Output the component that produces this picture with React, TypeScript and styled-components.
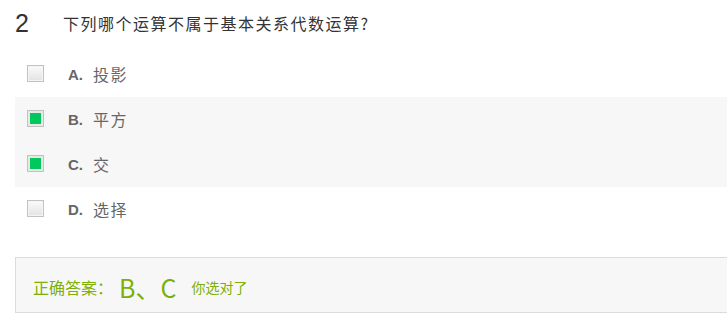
import styled, { createGlobalStyle } from "styled-components"

const GlobalStyle = createGlobalStyle`
    html, body {
        margin: 0;
        padding: 0;
        background: #fff;
        overflow: hidden;
    }
    body {
        font-family: "Liberation Sans", "Noto Sans CJK SC", sans-serif;
    }
`

const Page = styled.div`
    padding-left: 15px;
`

const Header = styled.div`
    display: flex;
    align-items: center;
    height: 46px;
    .num{
        width: 48px;
        font-size: 25px;
        color: #333;
        line-height: 1;
    }
    .title{
        font-family: "Noto Sans CJK SC", sans-serif;
        font-size: 16px;
        letter-spacing: 1.5px;
        color: #333;
    }
`

const OptionList = styled.div`
    margin-top: 6px;
    display: flex;
    flex-direction: column;
`

const Row = styled.div<{ $shaded?: boolean }>`
    display: flex;
    align-items: center;
    height: 45px;
    padding-left: 12px;
    background: ${p => (p.$shaded ? "#f7f7f7" : "transparent")};
    .key{
        width: 25px;
        margin-left: 24px;
        font-size: 15px;
        font-weight: 700;
        color: #666;
    }
    .text{
        font-family: "Noto Sans CJK SC", sans-serif;
        font-size: 16px;
        letter-spacing: 1.5px;
        color: #666;
        line-height: 1;
        padding-bottom: 2px;
    }
`

const Box = styled.span<{ $checked?: boolean }>`
    box-sizing: border-box;
    width: 17px;
    height: 17px;
    margin-bottom: 2px;
    border: 1px solid #c2c2c2;
    background: ${p => (p.$checked ? "#00c85a" : "linear-gradient(#fbfbfb, #e2e2e2)")};
    box-shadow: ${p => (p.$checked ? "inset 0 0 0 2px #e8e8e8" : "inset 0 0 0 1px #f4f4f4")};
`

const Answer = styled.div`
    margin-top: 25px;
    height: 56px;
    box-sizing: border-box;
    border: 1px solid #dcdcdc;
    border-right: none;
    background: #f7f7f7;
    display: flex;
    align-items: center;
    padding-left: 17px;
    padding-top: 3px;
    color: #7cb002;
    font-family: "Noto Sans CJK SC", sans-serif;
    .label{
        font-size: 16px;
    }
    .value{
        font-size: 25px;
        margin-left: 6px;
    }
    .note{
        font-size: 14px;
        margin-left: 15px;
    }
`

const options = [
    { key: "A.", text: "投影", checked: false },
    { key: "B.", text: "平方", checked: true },
    { key: "C.", text: "交", checked: true },
    { key: "D.", text: "选择", checked: false },
]

const App = () => {
  return (
    <Page>
        <GlobalStyle />
        <Header>
            <span className="num">2</span>
            <span className="title">下列哪个运算不属于基本关系代数运算?</span>
        </Header>
        <OptionList>
            {options.map(o => (
                <Row key={o.key} $shaded={o.checked}>
                    <Box $checked={o.checked} />
                    <span className="key">{o.key}</span>
                    <span className="text">{o.text}</span>
                </Row>
            ))}
        </OptionList>
        <Answer>
            <span className="label">正确答案：</span>
            <span className="value">B、C</span>
            <span className="note">你选对了</span>
        </Answer>
    </Page>
  )
}

export default App
